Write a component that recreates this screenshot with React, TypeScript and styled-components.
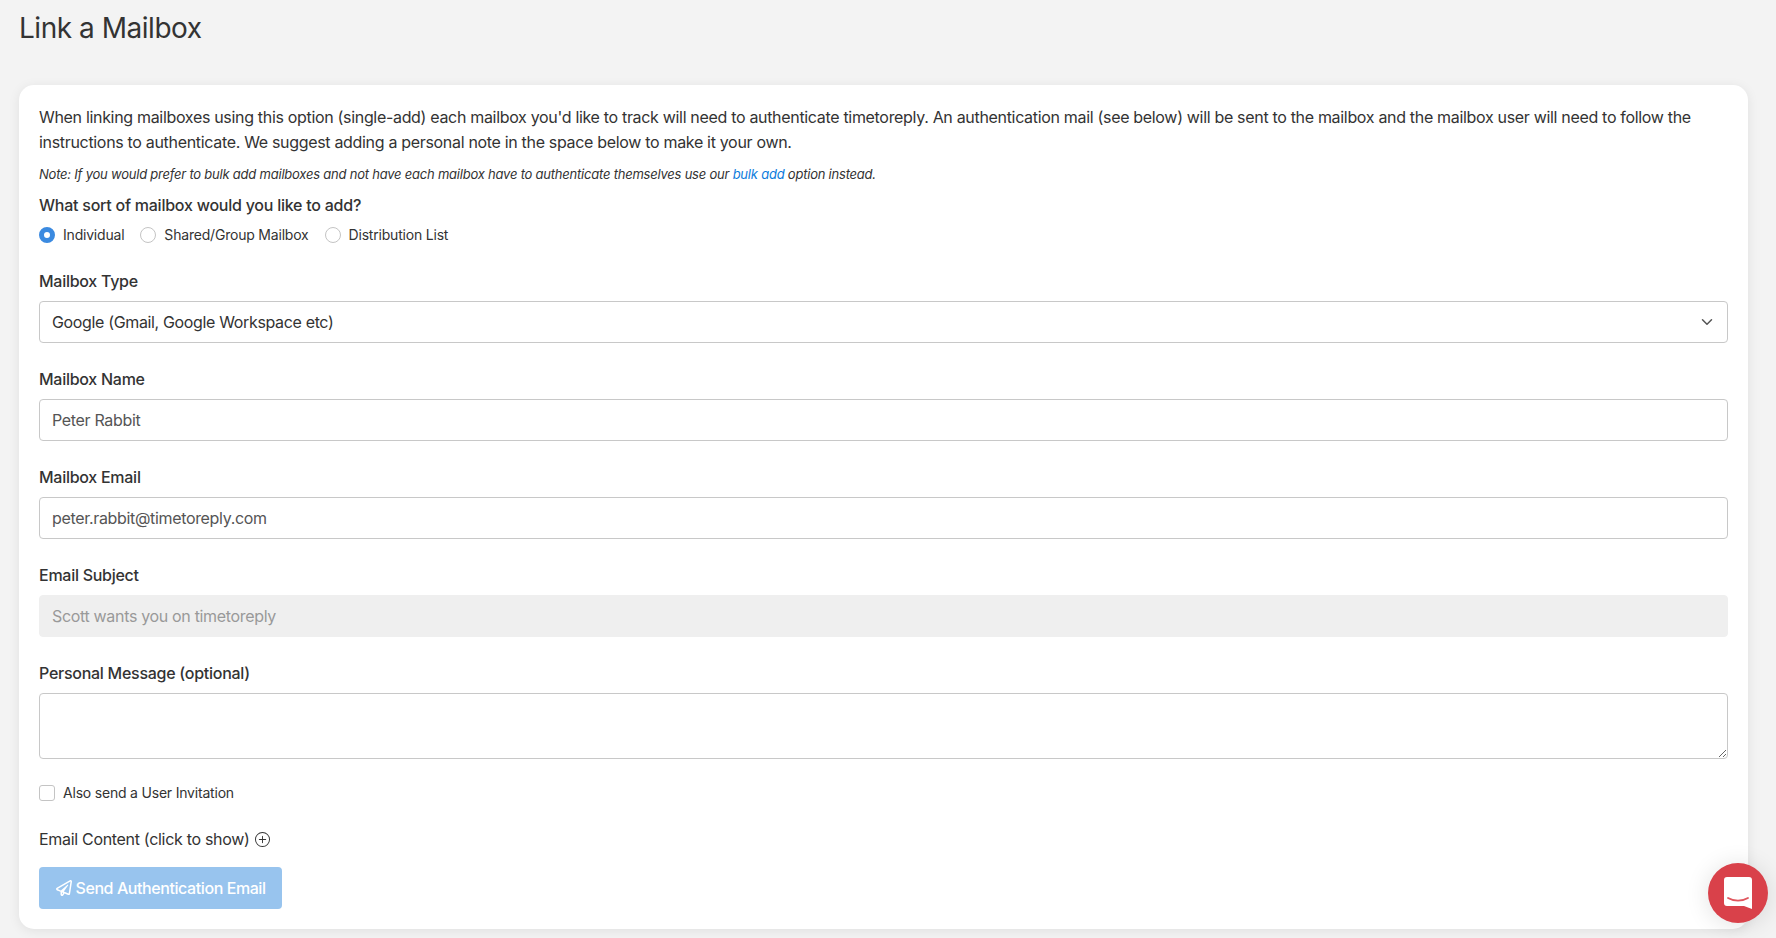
import styled, { createGlobalStyle } from "styled-components";
import { BsPlusCircle } from "react-icons/bs";
import { FaRegPaperPlane } from "react-icons/fa";
import { ChevronDown } from "lucide-react";

const GlobalStyle = createGlobalStyle`
  * {
    box-sizing: border-box;
  }

  html,
  body {
    margin: 0;
    height: 100%;
    overflow: hidden;
    background: #f3f3f3;
    color: #333333;
    font-family: Inter, "Liberation Sans", sans-serif;
    font-size: 16px;
    line-height: 24px;
  }
`;

const Page = styled.div`
  padding: 8px 28px 9px 19px;
`;

const Title = styled.h1`
  margin: 0 0 37px;
  font-size: 28px;
  line-height: 40px;
  font-weight: 400;
  letter-spacing: -0.47px;
  color: #333333;
`;

const Card = styled.div`
  background: #ffffff;
  border-radius: 15px;
  padding: 20px;
  box-shadow: 0 2px 12px rgba(0, 0, 0, 0.08);
`;

const Intro = styled.p`
  margin: 0 0 7px;
  font-size: 16px;
  line-height: 25px;
  letter-spacing: -0.32px;
`;

const Note = styled.p`
  margin: 0 0 7px;
  font-size: 13px;
  line-height: 24px;
  font-style: italic;
  letter-spacing: -0.22px;
`;

const Link = styled.a`
  color: #0d7bdc;
  text-decoration: none;
`;

const Question = styled.div`
  margin-bottom: 3px;
  font-size: 16px;
  font-weight: 500;
  line-height: 24px;
  letter-spacing: -0.24px;
`;

const RadioRow = styled.div`
  display: flex;
  align-items: center;
  gap: 16px;
  height: 30px;
  margin-bottom: 19px;
`;

const OptionLabel = styled.label`
  display: flex;
  align-items: center;
  gap: 8px;
  font-size: 14px;
  line-height: 24px;
  letter-spacing: -0.2px;
`;

const Radio = styled.span<{ $checked?: boolean }>`
  width: 16px;
  height: 16px;
  border-radius: 50%;
  background: #fff;
  border: ${(p) => (p.$checked ? "5px solid #3b8ae0" : "1px solid #c4c4c4")};
`;

const Group = styled.div`
  margin-bottom: 24px;
`;

const FieldLabel = styled.label`
  display: block;
  margin-bottom: 8px;
  font-size: 16px;
  font-weight: 500;
  line-height: 24px;
  letter-spacing: -0.27px;
`;

const SelectWrap = styled.div`
  position: relative;
  color: #555555;

  svg {
    position: absolute;
    top: 12px;
    right: 12px;
  }
`;

const Select = styled.select`
  display: block;
  width: 100%;
  height: 42px;
  padding: 0 12px;
  appearance: none;
  border: 1px solid #c8c8c8;
  border-radius: 4px;
  background: #fff;
  color: #333333;
  font: inherit;
  letter-spacing: -0.35px;
`;

const Input = styled.input`
  display: block;
  width: 100%;
  height: 42px;
  padding: 0 12px;
  border: 1px solid #c8c8c8;
  border-radius: 4px;
  background: #fff;
  color: #555555;
  font: inherit;
  letter-spacing: -0.33px;

  &:disabled {
    background: #efefef;
    border-color: #efefef;
    color: #999999;
  }
`;

const TextArea = styled.textarea`
  display: block;
  width: 100%;
  height: 66px;
  padding: 6px 12px;
  border: 1px solid #c8c8c8;
  border-radius: 4px;
  background: #fff;
  font: inherit;
`;

const CheckRow = styled.div`
  margin-top: -2px;
  margin-bottom: 22px;
`;

const CheckBox = styled.span`
  width: 16px;
  height: 16px;
  border: 1px solid #c4c4c4;
  border-radius: 3px;
  background: #fff;
`;

const ContentToggle = styled.div`
  display: flex;
  align-items: center;
  gap: 5px;
  margin-bottom: 16px;
  font-size: 16px;
  line-height: 24px;
  letter-spacing: -0.31px;
`;

const SendButton = styled.button`
  display: flex;
  align-items: center;
  gap: 4px;
  height: 42px;
  padding: 0 16.500px;
  border: none;
  border-radius: 4px;
  background: #98c4ee;
  color: #ffffff;
  font: inherit;
  font-weight: 500;
  letter-spacing: -0.42px;
`;

const ChatBubble = styled.div`
  position: fixed;
  right: 8px;
  bottom: 15px;
  width: 60px;
  height: 60px;
  display: flex;
  align-items: center;
  justify-content: center;
  border-radius: 50%;
  background: #d9414a;
  box-shadow: 0 2px 24px rgba(0, 0, 0, 0.12);
`;

function ChatIcon() {
  return (
    <svg width="28" height="32" viewBox="0 0 28 32">
      <path
        d="M3 0h22a3 3 0 0 1 3 3v29l-8-3H3a3 3 0 0 1-3-3V3a3 3 0 0 1 3-3z"
        fill="#fff"
      />
      <path
        d="M4 21c5.500 3.400 14.500 3.400 20 0"
        fill="none"
        stroke="#e0565e"
        strokeWidth="1.800"
        strokeLinecap="round"
      />
    </svg>
  );
}

function App() {
  return (
    <>
      <GlobalStyle />
      <Page>
        <Title>Link a Mailbox</Title>
        <Card>
          <Intro>
            When linking mailboxes using this option (single-add) each mailbox
            you'd like to track will need to authenticate timetoreply. An
            authentication mail (see below) will be sent to the mailbox and the
            mailbox user will need to follow the instructions to authenticate.
            We suggest adding a personal note in the space below to make it your
            own.
          </Intro>
          <Note>
            Note: If you would prefer to bulk add mailboxes and not have each
            mailbox have to authenticate themselves use our{" "}
            <Link href="#">bulk add</Link> option instead.
          </Note>
          <Question>What sort of mailbox would you like to add?</Question>
          <RadioRow>
            <OptionLabel>
              <Radio $checked />
              Individual
            </OptionLabel>
            <OptionLabel>
              <Radio />
              Shared/Group Mailbox
            </OptionLabel>
            <OptionLabel>
              <Radio />
              Distribution List
            </OptionLabel>
          </RadioRow>
          <Group>
            <FieldLabel>Mailbox Type</FieldLabel>
            <SelectWrap>
              <Select defaultValue="google">
                <option value="google">Google (Gmail, Google Workspace etc)</option>
              </Select>
              <ChevronDown size={18} />
            </SelectWrap>
          </Group>
          <Group>
            <FieldLabel>Mailbox Name</FieldLabel>
            <Input readOnly value="Peter Rabbit" />
          </Group>
          <Group>
            <FieldLabel>Mailbox Email</FieldLabel>
            <Input readOnly value="peter.rabbit@timetoreply.com" />
          </Group>
          <Group>
            <FieldLabel>Email Subject</FieldLabel>
            <Input disabled value="Scott wants you on timetoreply" />
          </Group>
          <Group>
            <FieldLabel>Personal Message (optional)</FieldLabel>
            <TextArea />
          </Group>
          <CheckRow>
            <OptionLabel>
              <CheckBox />
              Also send a User Invitation
            </OptionLabel>
          </CheckRow>
          <ContentToggle>
            Email Content (click to show) <BsPlusCircle size={15} />
          </ContentToggle>
          <SendButton>
            <FaRegPaperPlane size={16} />
            Send Authentication Email
          </SendButton>
        </Card>
      </Page>
      <ChatBubble>
        <ChatIcon />
      </ChatBubble>
    </>
  );
}

export default App;
